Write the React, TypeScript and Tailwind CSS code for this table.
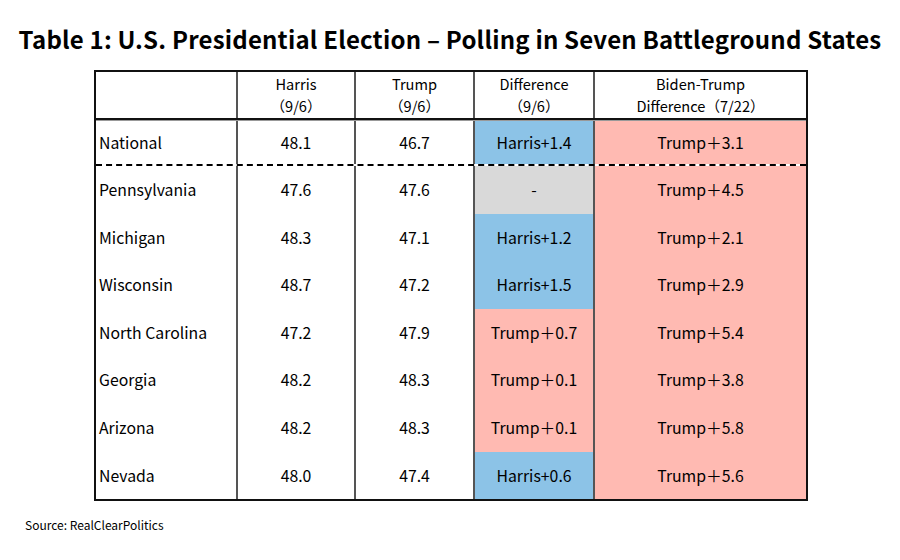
import React from "react";

type Row = { name: string; h: string; t: string; d: string; dc: "b" | "p" | "g"; bt: string };

const rows: Row[] = [
  { name: "Pennsylvania", h: "47.6", t: "47.6", d: "-", dc: "g", bt: "Trump＋4.5" },
  { name: "Michigan", h: "48.3", t: "47.1", d: "Harris+1.2", dc: "b", bt: "Trump＋2.1" },
  { name: "Wisconsin", h: "48.7", t: "47.2", d: "Harris+1.5", dc: "b", bt: "Trump＋2.9" },
  { name: "North Carolina", h: "47.2", t: "47.9", d: "Trump＋0.7", dc: "p", bt: "Trump＋5.4" },
  { name: "Georgia", h: "48.2", t: "48.3", d: "Trump＋0.1", dc: "p", bt: "Trump＋3.8" },
  { name: "Arizona", h: "48.2", t: "48.3", d: "Trump＋0.1", dc: "p", bt: "Trump＋5.8" },
  { name: "Nevada", h: "48.0", t: "47.4", d: "Harris+0.6", dc: "b", bt: "Trump＋5.6" },
];

const bg = (c: "b" | "p" | "g") =>
  c === "b" ? "bg-[#8cc3e7]" : c === "p" ? "bg-[#ffbab2]" : "bg-[#d9d9d9]";

const vline = "border-l-2 border-[#555]";

export default function App() {
  return (
    <div
      className="w-[900px] h-[560px] bg-white text-black relative"
      style={{ fontFamily: '"Noto Sans CJK JP", "Noto Sans", sans-serif' }}
    >
      <div className="pt-[22px] h-[70px] text-center text-[24px] font-bold leading-[34px] tracking-[0.2px]">
        Table 1: U.S. Presidential Election – Polling in Seven Battleground States
      </div>
      <div className="ml-[94px] w-[714px] border-2 border-[#111] text-[15.8px]">
        {/* header */}
        <div className="flex h-[48px] border-b-2 border-[#111] text-[14.6px] leading-[22px]">
          <div className="w-[140px]" />
          <div className={`w-[118px] ${vline} flex flex-col items-center justify-center`}>
            <span>Harris</span>
            <span>（9/6）</span>
          </div>
          <div className={`w-[119px] ${vline} flex flex-col items-center justify-center`}>
            <span>Trump</span>
            <span>（9/6）</span>
          </div>
          <div className={`w-[120px] ${vline} flex flex-col items-center justify-center`}>
            <span>Difference</span>
            <span>（9/6）</span>
          </div>
          <div className={`flex-1 ${vline} flex flex-col items-center justify-center`}>
            <span>Biden-Trump</span>
            <span>Difference（7/22）</span>
          </div>
        </div>
        <div className="h-px bg-[#999]" />
        {/* national */}
        <div className="flex h-[45px] border-b-2 border-dashed border-black">
          <div className="w-[140px] flex items-center pl-[3px]">National</div>
          <div className={`w-[118px] ${vline} flex items-center justify-center`}>48.1</div>
          <div className={`w-[119px] ${vline} flex items-center justify-center`}>46.7</div>
          <div className={`w-[120px] ${vline} ${bg("b")} flex items-center justify-center`}>Harris+1.4</div>
          <div className={`flex-1 ${vline} ${bg("p")} flex items-center justify-center`}>Trump＋3.1</div>
        </div>
        {rows.map((r) => (
          <div key={r.name} className="flex h-[47.6px]">
            <div className="w-[140px] flex items-center pl-[3px]">{r.name}</div>
            <div className={`w-[118px] ${vline} flex items-center justify-center`}>{r.h}</div>
            <div className={`w-[119px] ${vline} flex items-center justify-center`}>{r.t}</div>
            <div className={`w-[120px] ${vline} ${bg(r.dc)} flex items-center justify-center`}>{r.d}</div>
            <div className={`flex-1 ${vline} ${bg("p")} flex items-center justify-center`}>{r.bt}</div>
          </div>
        ))}
      </div>
      <div className="pl-[25px] pt-[16px] text-[12px] leading-[16px]">Source: RealClearPolitics</div>
    </div>
  );
}
